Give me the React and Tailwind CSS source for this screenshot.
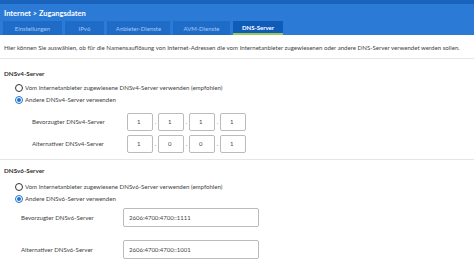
import { useState } from "react";

const TABS = ["Einstellungen", "IPv6", "Anbieter-Dienste", "AVM-Dienste", "DNS-Server"];
const TAB_W = ["w-[59px]", "w-[39px]", "w-[63px]", "w-[57px]", "w-[50px]"];

function Radio({ checked, label }) {
  return (
    <div className="flex items-center gap-[2px] h-[12px]">
      <span
        className={`w-[8px] h-[8px] rounded-full border flex items-center justify-center ${
          checked ? "border-[#1e73d2]" : "border-[#333]"
        }`}
      >
        {checked && <span className="w-[4px] h-[4px] rounded-full bg-[#1e73d2]" />}
      </span>
      <span className="text-[6.1px] text-[#444]">{label}</span>
    </div>
  );
}

function Octets({ label, values }) {
  return (
    <div className="flex items-center h-[18px]">
      <span className="w-[123px] pl-[28px] text-[6.1px] text-[#444] whitespace-nowrap">{label}</span>
      <div className="flex items-center">
        {values.map((v, i) => (
          <div key={i} className="flex items-center">
            {i > 0 && <span className="w-[5px] text-center text-[6px] text-[#666]">.</span>}
            <div className="w-[26px] h-[18px] border border-[#bbb] rounded-[2px] flex items-center pl-[9px] text-[6px] text-[#444]">
              {v}
            </div>
          </div>
        ))}
      </div>
    </div>
  );
}

function V6Row({ label, value }) {
  return (
    <div className="flex items-center h-[19px]">
      <span className="w-[119px] pl-[17px] text-[6.1px] text-[#444] whitespace-nowrap">{label}</span>
      <div className="w-[136px] h-[19px] border border-[#bbb] rounded-[2px] flex items-center pl-[5px] text-[6px] text-[#444]">
        {value}
      </div>
    </div>
  );
}

export default function App() {
  const [active] = useState("DNS-Server");

  return (
    <div className="w-[474px] h-[265px] bg-white overflow-hidden font-['Lato',sans-serif]">
      <div className="h-[4px] bg-[#1a63bd]" />
      <div className="bg-[#2a7ad6] pt-[4px]">
        <div className="px-[4px] h-[13px] text-[7.5px] font-bold text-white">Internet &gt; Zugangsdaten</div>
        <div className="flex gap-[3px] px-[3px]">
          {TABS.map((t, i) => {
            const on = t === active;
            return (
              <div
                key={t}
                className={`${TAB_W[i]} h-[14px] flex items-center justify-center text-[6px] ${
                  on
                    ? "bg-[#0f5cb8] text-white font-bold border-b-[2px] border-[#9cc85a]"
                    : "bg-[#1f6cc8] text-[#a7c6ee]"
                }`}
              >
                {t}
              </div>
            );
          })}
        </div>
      </div>

      <div className="px-[4px] pt-[8px]">
        <p className="text-[6.1px] text-[#444] whitespace-nowrap">
          Hier können Sie auswählen, ob für die Namensauflösung von Internet-Adressen die vom Internetanbieter zugewiesenen oder andere DNS-Server verwendet werden sollen.
        </p>
      </div>
      <div className="mt-[6px] border-t border-[#e6e6e6]" />

      <div className="px-[4px] pt-[10px]">
        <div className="text-[6.3px] font-bold text-[#333]">DNSv4-Server</div>
        <div className="pl-[11px] pt-[3px] flex flex-col">
          <Radio label="Vom Internetanbieter zugewiesene DNSv4-Server verwenden (empfohlen)" />
          <Radio checked label="Andere DNSv4-Server verwenden" />
        </div>
        <div className="pt-[7px] flex flex-col gap-[4px]">
          <Octets label="Bevorzugter DNSv4-Server" values={["1", "1", "1", "1"]} />
          <Octets label="Alternativer DNSv4-Server" values={["1", "0", "0", "1"]} />
        </div>
      </div>
      <div className="mt-[6px] border-t border-[#e6e6e6]" />

      <div className="px-[4px] pt-[6px]">
        <div className="text-[6.3px] font-bold text-[#333]">DNSv6-Server</div>
        <div className="pl-[11px] pt-[6px] flex flex-col">
          <Radio label="Vom Internetanbieter zugewiesene DNSv6-Server verwenden (empfohlen)" />
          <Radio checked label="Andere DNSv6-Server verwenden" />
        </div>
        <div className="pt-[3px] flex flex-col gap-[13px]">
          <V6Row label="Bevorzugter DNSv6-Server" value="2606:4700:4700::1111" />
          <V6Row label="Alternativer DNSv6-Server" value="2606:4700:4700::1001" />
        </div>
      </div>
    </div>
  );
}
